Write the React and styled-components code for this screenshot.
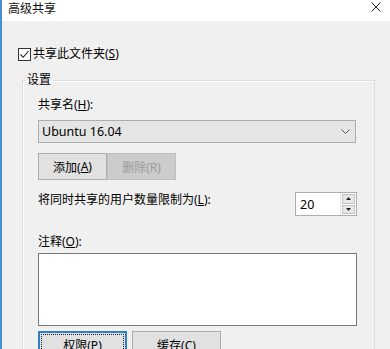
import React from 'react'
import styled, { createGlobalStyle } from 'styled-components'

const GlobalStyle = createGlobalStyle`
  html, body {
    margin: 0;
    padding: 0;
    background: #f0f0f0;
  }
  * {
    box-sizing: border-box;
  }
`

const Window = styled.div`
  width: 390px;
  height: 349px;
  overflow: hidden;
  background: #f0f0f0;
  border-left: 2px solid #4c8fd0;
  display: flex;
  flex-direction: column;
  font-family: "Noto Sans", "Noto Sans CJK SC", sans-serif;
  font-size: 12px;
  color: #000;
`

const TitleBar = styled.div`
  height: 21px;
  flex: none;
  background: #fff;
  display: flex;
  justify-content: space-between;
  align-items: flex-start;
  padding: 1px 9px 0 6px;
  line-height: 14px;
  .title {
    font-family: "Noto Sans CJK SC", sans-serif;
    font-size: 12px;
    color: #111;
  }
  svg {
    margin-top: 1px;
  }
`

const Content = styled.div`
  flex: 1;
  padding: 0 15px 0 16px;
  display: flex;
  flex-direction: column;
`

const CheckRow = styled.label`
  margin-top: 25px;
  height: 16px;
  display: flex;
  align-items: center;
  gap: 2px;
  line-height: 16px;
`

const CheckBox = styled.span`
  width: 13px;
  height: 13px;
  border: 1px solid #333;
  background: #fff;
  display: flex;
  align-items: center;
  justify-content: center;
`

const Group = styled.fieldset`
  margin: 10px 0 0 4px;
  padding: 0 15px 40px 15px;
  border: 1px solid #dcdcdc;
  box-shadow: inset 1px 1px 0 #fff;
  min-width: 0;
  display: flex;
  flex-direction: column;

  legend {
    margin-left: -13px;
    padding: 0 2px;
    line-height: 16px;
  }
`

const Label = styled.div`
  line-height: 16px;
  margin-top: ${p => p.$top || 0}px;
  white-space: nowrap;
`

const Combo = styled.div`
  margin-top: 7px;
  height: 23px;
  width: 318px;
  background: #e5e5e5;
  border: 1px solid #adadad;
  display: flex;
  align-items: center;
  justify-content: space-between;
  padding: 0 5px 0 3px;
  font-size: 12.5px;
`

const ButtonRow = styled.div`
  display: flex;
  margin-top: ${p => p.$top}px;
  gap: ${p => p.$gap || 0}px;
`

const Button = styled.div`
  width: ${p => p.$w}px;
  height: 27px;
  flex: none;
  display: flex;
  align-items: center;
  justify-content: center;
  background: ${p => (p.disabled ? '#cccccc' : '#e1e1e1')};
  border: 1px solid ${p => (p.disabled ? '#bfbfbf' : '#adadad')};
  color: ${p => (p.disabled ? '#9a9a9a' : '#000')};
  ${p =>
    p.$default &&
    `
    border: 2px solid #2f7fc8;
    outline: 1px dotted #222;
    outline-offset: -4px;
  `}
`

const LimitRow = styled.div`
  margin-top: 12px;
  display: flex;
  justify-content: space-between;
  align-items: flex-start;
  padding-right: 2px;
`

const Spin = styled.div`
  width: 62px;
  height: 24px;
  border: 1px solid #abadb3;
  background: #fff;
  display: flex;

  .value {
    flex: 1;
    padding: 3px 0 0 4px;
    font-size: 12.5px;
  }
`

const SpinButtons = styled.div`
  width: 16px;
  display: flex;
  flex-direction: column;
  gap: 1px;
  padding: 1px;
  background: #fff;
  border-left: 1px solid #e3e3e3;
`

const SpinButton = styled.div`
  flex: 1;
  background: #e8e8e8;
  border: 1px solid #c2c2c2;
  display: flex;
  align-items: center;
  justify-content: center;
`

const TextArea = styled.div`
  margin-top: 3px;
  height: 73px;
  width: 319px;
  background: #fff;
  border: 1px solid #7a7a7a;
`

export default function App() {
  return (
    <>
      <GlobalStyle />
      <Window>
        <TitleBar>
          <span className="title">高级共享</span>
          <svg width="10" height="10" viewBox="0 0 10 10">
            <path d="M0.5 0.5 L9.5 9.5 M9.5 0.5 L0.5 9.5" stroke="#222" strokeWidth="1" />
          </svg>
        </TitleBar>
        <Content>
          <CheckRow>
            <CheckBox>
              <svg width="11" height="11" viewBox="0 0 11 11">
                <path d="M1.5 5.5 L4.2 8.3 L9.5 2" fill="none" stroke="#222" strokeWidth="1.1" />
              </svg>
            </CheckBox>
            <span>共享此文件夹(<u>S</u>)</span>
          </CheckRow>
          <Group>
            <legend>设置</legend>
            <Label $top={9}>共享名(<u>H</u>):</Label>
            <Combo>
              <span>Ubuntu 16.04</span>
              <svg width="9" height="5" viewBox="0 0 9 5">
                <path d="M0.5 0.5 L4.5 4.5 L8.5 0.5" fill="none" stroke="#555" strokeWidth="1" />
              </svg>
            </Combo>
            <ButtonRow $top={10}>
              <Button $w={69}>添加(<u>A</u>)</Button>
              <Button $w={69} disabled>删除(R)</Button>
            </ButtonRow>
            <LimitRow>
              <Label>将同时共享的用户数量限制为(<u>L</u>):</Label>
              <Spin>
                <span className="value">20</span>
                <SpinButtons>
                  <SpinButton>
                    <svg width="5" height="3" viewBox="0 0 5 3">
                      <path d="M0 3 L2.5 0 L5 3 Z" fill="#222" />
                    </svg>
                  </SpinButton>
                  <SpinButton>
                    <svg width="5" height="3" viewBox="0 0 5 3">
                      <path d="M0 0 L2.5 3 L5 0 Z" fill="#222" />
                    </svg>
                  </SpinButton>
                </SpinButtons>
              </Spin>
            </LimitRow>
            <Label $top={18}>注释(<u>O</u>):</Label>
            <TextArea />
            <ButtonRow $top={5} $gap={5}>
              <Button $w={89} $default>权限(P)</Button>
              <Button $w={89}>缓存(C)</Button>
            </ButtonRow>
          </Group>
        </Content>
      </Window>
    </>
  )
}
